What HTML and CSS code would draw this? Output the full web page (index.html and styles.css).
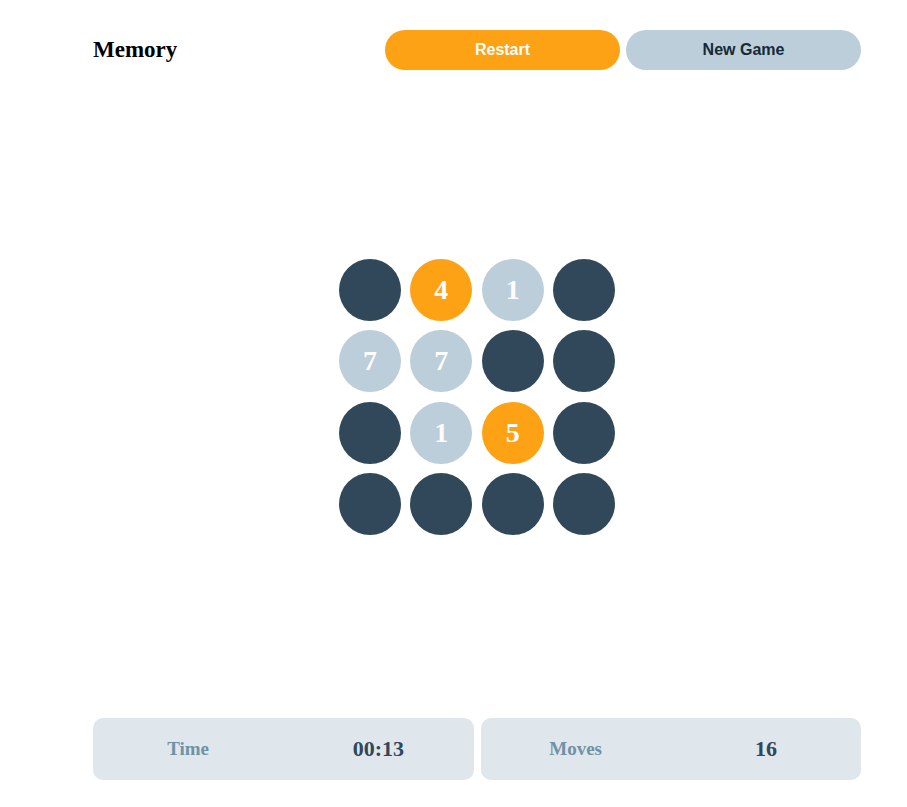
FILE: index.html
```html
<!DOCTYPE html>
<html>
<head>
<meta charset="utf-8">
<link rel="stylesheet" href="styles.css">
</head>
<body>
<div class="page">
  <header class="header">
    <h1 class="logo">Memory</h1>
    <div class="actions">
      <button class="btn btn-primary">Restart</button>
      <button class="btn btn-secondary">New Game</button>
    </div>
  </header>
  <main class="board-wrap">
    <div class="board">
      <div class="tile hidden"></div>
      <div class="tile active">4</div>
      <div class="tile matched">1</div>
      <div class="tile hidden"></div>
      <div class="tile matched">7</div>
      <div class="tile matched">7</div>
      <div class="tile hidden"></div>
      <div class="tile hidden"></div>
      <div class="tile hidden"></div>
      <div class="tile matched">1</div>
      <div class="tile active">5</div>
      <div class="tile hidden"></div>
      <div class="tile hidden"></div>
      <div class="tile hidden"></div>
      <div class="tile hidden"></div>
      <div class="tile hidden"></div>
    </div>
  </main>
  <footer class="stats">
    <div class="stat">
      <span class="stat-label">Time</span>
      <span class="stat-value">00:13</span>
    </div>
    <div class="stat">
      <span class="stat-label">Moves</span>
      <span class="stat-value">16</span>
    </div>
  </footer>
</div>
</body>
</html>
```
FILE: styles.css
```css
* { box-sizing: border-box; }
html, body { margin: 0; padding: 0; background: #fff; }
body { font-family: "Liberation Serif", "Times New Roman", serif; }
.page {
  height: 807px;
  padding: 30px 46px 27px 93px;
  display: flex;
  flex-direction: column;
}
.header {
  display: flex;
  align-items: center;
  justify-content: space-between;
  height: 40px;
}
.logo {
  margin: 0;
  font-size: 23px;
  font-weight: bold;
  color: #152938;
  color: #000;
}
.actions { display: flex; gap: 6px; }
.btn {
  width: 235px;
  height: 40px;
  border: none;
  border-radius: 20px;
  font-family: "Liberation Sans", Arial, sans-serif;
  font-size: 16px;
  font-weight: bold;
  cursor: pointer;
}
.btn-primary { background: #fda214; color: #fcfcfc; }
.btn-secondary { background: #bcced9; color: #152938; }
.board-wrap {
  flex: 1;
  display: flex;
  align-items: center;
  justify-content: center;
  padding-top: 6px;
}
.board {
  display: grid;
  grid-template-columns: repeat(4, 62px);
  grid-auto-rows: 62px;
  column-gap: 9.3px;
  row-gap: 9.3px;
}
.tile {
  width: 62px;
  height: 62px;
  border-radius: 50%;
  display: flex;
  align-items: center;
  justify-content: center;
  font-size: 28px;
  font-weight: bold;
  color: #fcfcfc;
}
.hidden { background: #304859; }
.active { background: #fda214; }
.matched { background: #bcced9; }
.stats {
  display: flex;
  gap: 7px;
  height: 62px;
}
.stat {
  flex: 1;
  display: flex;
  align-items: center;
  background: #dfe7ec;
  border-radius: 10px;
}
.stat-label, .stat-value {
  flex: 1;
  text-align: center;
  font-weight: bold;
}
.stat-label { font-size: 19px; color: #7191a5; }
.stat-value { font-size: 22px; color: #304859; }
```
